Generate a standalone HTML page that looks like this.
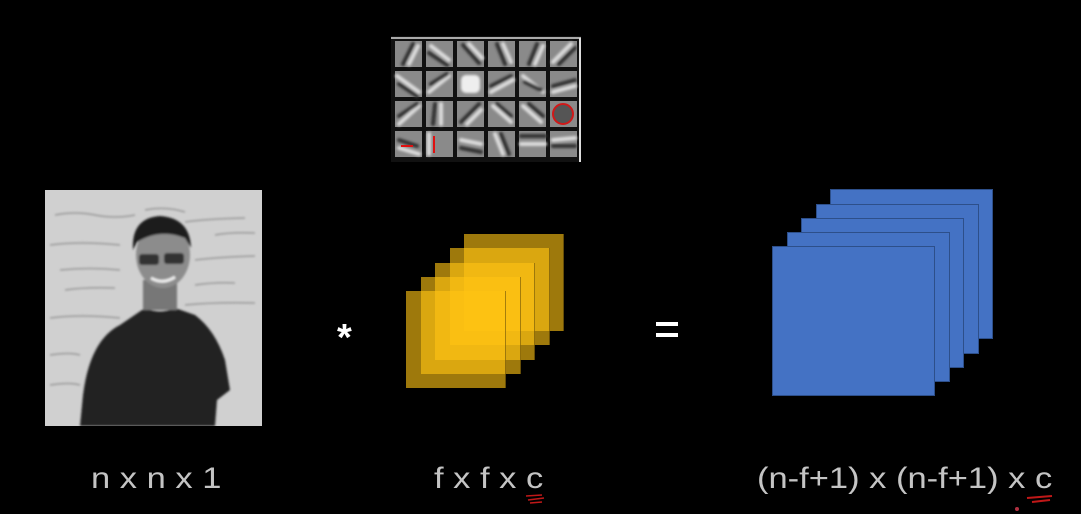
<!DOCTYPE html>
<html><head><meta charset="utf-8"><style>
html,body{margin:0;padding:0;background:#000;width:1081px;height:514px;overflow:hidden;position:relative;font-family:"Liberation Sans",sans-serif}
.t{position:absolute;color:#c4c4c4;font-size:30px;white-space:nowrap;top:462px;transform:scaleX(1.15);transform-origin:0 0}
.y{position:absolute;width:100px;height:97px;background:rgba(255,196,20,0.62);box-sizing:border-box;border-right:1px solid rgba(0,0,0,.35)}
.b{position:absolute;width:163px;height:150px;background:#4472c4;border:1px solid #2d4f8a;box-sizing:border-box}
</style></head><body>
<svg style="position:absolute;left:391px;top:36px" width="192" height="128">
<defs><filter id="bl"><feGaussianBlur stdDeviation="1.3"/></filter></defs>
<rect x="0" y="0" width="190" height="126" fill="#111"/>
<line x1="189" y1="2" x2="189" y2="126" stroke="#ddd" stroke-width="2"/>
<line x1="0" y1="2" x2="190" y2="2" stroke="#ddd" stroke-width="1.5"/>
<g fill="#8a8a8a">
<rect x="4" y="5" width="27" height="26"/><rect x="35" y="5" width="27" height="26"/><rect x="66" y="5" width="27" height="26"/><rect x="97" y="5" width="27" height="26"/><rect x="128" y="5" width="27" height="26"/><rect x="159" y="5" width="27" height="26"/>
<rect x="4" y="35" width="27" height="26"/><rect x="35" y="35" width="27" height="26"/><rect x="66" y="35" width="27" height="26"/><rect x="97" y="35" width="27" height="26"/><rect x="128" y="35" width="27" height="26"/><rect x="159" y="35" width="27" height="26"/>
<rect x="4" y="65" width="27" height="26"/><rect x="35" y="65" width="27" height="26"/><rect x="66" y="65" width="27" height="26"/><rect x="97" y="65" width="27" height="26"/><rect x="128" y="65" width="27" height="26"/><rect x="159" y="65" width="27" height="26"/>
<rect x="4" y="95" width="27" height="26"/><rect x="35" y="95" width="27" height="26"/><rect x="66" y="95" width="27" height="26"/><rect x="97" y="95" width="27" height="26"/><rect x="128" y="95" width="27" height="26"/><rect x="159" y="95" width="27" height="26"/>
</g>
<g stroke-width="4" stroke-linecap="round" filter="url(#bl)">
<rect x="70" y="39" width="19" height="18" rx="5" fill="#eee" stroke="none"/>
<line x1="12" y1="28" x2="22" y2="8" stroke="#333"/><line x1="18" y1="28" x2="27" y2="10" stroke="#ddd"/>
<line x1="40" y1="10" x2="58" y2="24" stroke="#ddd"/><line x1="38" y1="17" x2="56" y2="29" stroke="#333"/>
<line x1="72" y1="9" x2="88" y2="27" stroke="#333"/><line x1="78" y1="8" x2="91" y2="22" stroke="#ddd"/>
<line x1="106" y1="8" x2="114" y2="28" stroke="#333"/><line x1="112" y1="8" x2="120" y2="26" stroke="#ddd"/>
<line x1="138" y1="28" x2="146" y2="8" stroke="#333"/><line x1="144" y1="28" x2="152" y2="10" stroke="#ddd"/>
<line x1="162" y1="26" x2="180" y2="8" stroke="#ddd"/><line x1="168" y1="28" x2="184" y2="12" stroke="#333"/>
<line x1="6" y1="40" x2="28" y2="56" stroke="#ddd"/><line x1="8" y1="48" x2="26" y2="60" stroke="#333"/>
<line x1="38" y1="56" x2="58" y2="40" stroke="#ddd"/><line x1="40" y1="48" x2="56" y2="38" stroke="#333"/>
<line x1="100" y1="56" x2="122" y2="44" stroke="#ddd"/><line x1="100" y1="50" x2="120" y2="40" stroke="#333"/>
<line x1="132" y1="40" x2="152" y2="56" stroke="#ddd"/><line x1="134" y1="46" x2="150" y2="54" stroke="#333"/>
<line x1="162" y1="50" x2="184" y2="44" stroke="#333"/><line x1="162" y1="56" x2="184" y2="50" stroke="#ddd"/>
<line x1="8" y1="88" x2="28" y2="70" stroke="#ddd"/><line x1="8" y1="80" x2="26" y2="68" stroke="#333"/>
<line x1="44" y1="68" x2="42" y2="88" stroke="#333"/><line x1="50" y1="68" x2="50" y2="88" stroke="#ddd"/>
<line x1="70" y1="86" x2="88" y2="68" stroke="#333"/><line x1="76" y1="88" x2="90" y2="74" stroke="#ddd"/>
<line x1="102" y1="70" x2="120" y2="86" stroke="#ddd"/><line x1="106" y1="68" x2="120" y2="80" stroke="#333"/>
<line x1="132" y1="70" x2="150" y2="86" stroke="#ddd"/><line x1="138" y1="68" x2="152" y2="80" stroke="#333"/>
<line x1="8" y1="112" x2="28" y2="118" stroke="#ddd"/><line x1="8" y1="104" x2="26" y2="110" stroke="#333"/>
<line x1="38" y1="98" x2="38" y2="118" stroke="#ddd"/>
<line x1="70" y1="104" x2="90" y2="108" stroke="#ddd"/><line x1="70" y1="112" x2="90" y2="116" stroke="#333"/>
<line x1="104" y1="98" x2="112" y2="118" stroke="#ddd"/><line x1="110" y1="98" x2="118" y2="118" stroke="#333"/>
<line x1="130" y1="100" x2="154" y2="100" stroke="#333"/><line x1="130" y1="108" x2="154" y2="108" stroke="#ddd"/>
<line x1="162" y1="104" x2="184" y2="102" stroke="#ddd"/><line x1="162" y1="110" x2="184" y2="110" stroke="#333"/>
</g>
<circle cx="172" cy="78" r="10" fill="#555" stroke="#d01818" stroke-width="2"/>
<line x1="10" y1="110" x2="22" y2="110" stroke="#e01010" stroke-width="2"/>
<line x1="43" y1="100" x2="43" y2="117" stroke="#e01010" stroke-width="2"/>
</svg>

<svg style="position:absolute;left:45px;top:190px" width="217" height="236">
<defs><filter id="b2"><feGaussianBlur stdDeviation="1"/></filter></defs>
<rect width="217" height="236" fill="#d0d0d0"/>
<g stroke="#999" stroke-width="1.5" fill="none" filter="url(#b2)">
<path d="M10 25 q20 -4 40 0 t40 0 M100 20 q20 -4 40 2 M140 32 q20 -3 60 -4 M5 55 q30 -4 70 0 M170 45 q15 -3 40 -2 M15 80 q30 -3 60 0 M150 70 q25 -3 60 -4 M20 100 q20 -3 50 -2 M150 95 q20 -3 40 -2 M5 128 q30 -4 70 0 M140 115 q30 -3 70 -2 M5 165 q20 -3 30 0 M5 195 q20 -3 30 0"/>
</g>
<g filter="url(#b2)">
<path d="M35 236 L38 205 Q45 150 75 135 L100 118 Q115 125 130 118 L150 125 Q170 140 180 170 L185 200 L172 210 L170 236 Z" fill="#222"/>
<rect x="98" y="90" width="34" height="30" fill="#777"/>
<ellipse cx="118" cy="65" rx="27" ry="33" fill="#8c8c8c"/>
<path d="M88 60 Q86 28 115 26 Q145 28 146 58 L140 48 Q115 38 92 52 Z" fill="#1c1c1c"/>
<rect x="94" y="64" width="20" height="11" rx="3" fill="#333"/><rect x="119" y="63" width="20" height="11" rx="3" fill="#333"/>
<path d="M106 88 Q118 95 130 87" stroke="#eee" stroke-width="3" fill="none"/>
</g>
</svg>

<div style="position:absolute;left:337px;top:318px;color:#fff;font-size:38px;font-weight:bold;line-height:40px">*</div>
<div style="position:absolute;left:656px;top:322px;width:22px;height:4px;background:#fff"></div>
<div style="position:absolute;left:656px;top:333px;width:22px;height:4px;background:#fff"></div>

<div class="y" style="left:464px;top:234px"></div>
<div class="y" style="left:450px;top:248px"></div>
<div class="y" style="left:435px;top:263px"></div>
<div class="y" style="left:421px;top:277px"></div>
<div class="y" style="left:406px;top:291px"></div>

<div class="b" style="left:830px;top:189px"></div>
<div class="b" style="left:816px;top:204px"></div>
<div class="b" style="left:801px;top:218px"></div>
<div class="b" style="left:787px;top:232px"></div>
<div class="b" style="left:772px;top:246px"></div>

<div class="t" style="left:91px">n x n x 1</div>
<div class="t" style="left:434px">f x f x c</div>
<div class="t" style="left:757px">(n-f+1) x (n-f+1) x c</div>
<svg style="position:absolute;left:522px;top:492px" width="30" height="14"><path d="M4 4 L20 3 M6 8 L22 6 M8 11 L20 10" stroke="#c01818" stroke-width="1.6" fill="none"/></svg>
<svg style="position:absolute;left:1024px;top:493px" width="36" height="20"><path d="M3 5 L28 3 M8 9 L26 7" stroke="#c01818" stroke-width="2" fill="none"/></svg>
<div style="position:absolute;left:1015px;top:507px;width:4px;height:4px;border-radius:2px;background:#b03040"></div>
</body></html>
